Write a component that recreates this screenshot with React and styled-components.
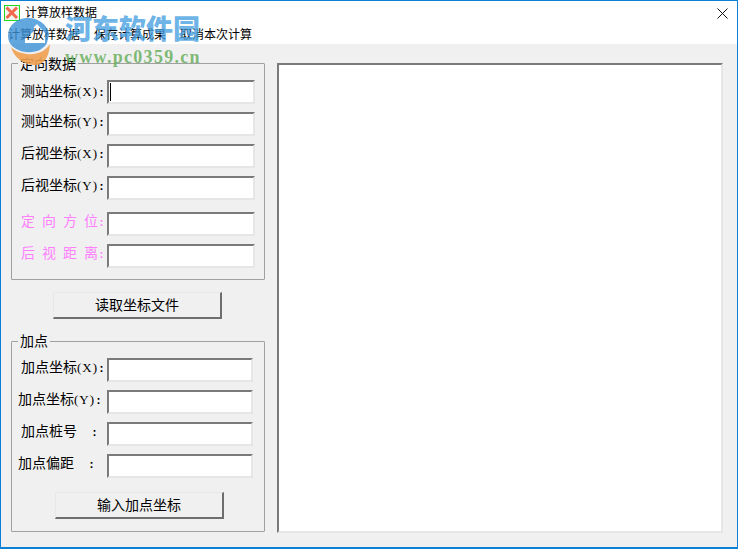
import React from "react";
import styled, { createGlobalStyle } from "styled-components";

const Global = createGlobalStyle`
  html, body { margin: 0; padding: 0; background: #fff; }
  * { box-sizing: border-box; }
`;

const cjk = `"Noto Sans CJK SC", "Liberation Sans", sans-serif`;

const Win = styled.div`
  position: relative;
  width: 738px;
  height: 549px;
  border: 1px solid #0c7fd6;
  border-bottom-width: 2px;
  background: #f0f0f0;
  font-family: ${cjk};
  font-size: 14px;
  color: #000;
  overflow: hidden;
  display: flex;
  flex-direction: column;
`;
const TitleBar = styled.div`
  height: 22px;
  background: #fff;
  display: flex;
  align-items: center;
  padding: 2px 0 0 3px;
  flex: none;
`;
const Title = styled.span`
  margin-left: 5px;
  margin-bottom: 2px;
  font-size: 12px;
  line-height: 18px;
`;
const Close = styled.svg`
  margin-left: auto;
  margin-right: 9px;
  width: 11px;
  height: 11px;
`;
const Menu = styled.div`
  height: 21px;
  background: #fff;
  flex: none;
  display: flex;
  align-items: center;
  padding-left: 7px;
  gap: 14px;
  font-size: 12px;
`;
const Body = styled.div`
  flex: 1;
  display: flex;
  padding: 19px 14px 13px 10px;
  gap: 12px;
`;
const Left = styled.div`
  width: 254px;
  display: flex;
  flex-direction: column;
  flex: none;
`;
const Group = styled.div`
  position: relative;
  border: 1px solid #a0a0a0;
  border-radius: 1px;
  height: ${p => p.$h}px;
  padding: ${p => p.$pad};
  margin-top: ${p => p.$mt || 0}px;
  display: flex;
  flex-direction: column;
`;
const Legend = styled.span`
  position: absolute;
  top: ${p => p.$top}px;
  left: 6px;
  padding: 0 2px;
  background: #f0f0f0;
  font-size: 14px;
  line-height: 18px;
`;
const Row = styled.div`
  display: flex;
  align-items: center;
  height: 24px;
  margin-bottom: ${p => p.$mb}px;
  flex: none;
`;
const Label = styled.label`
  width: ${p => p.$w}px;
  flex: none;
  padding-left: ${p => p.$pl}px;
  padding-bottom: ${p => p.$up * 2}px;
  white-space: nowrap;
  font-size: 14px;
  line-height: 18px;
  color: ${p => p.$pink ? "#ff80ff" : "#000"};
`;
const Spaced = styled.span`
  letter-spacing: 7px;
`;
const Latin = styled.span`
  font-family: "Liberation Serif", serif;
  font-size: 13px;
  letter-spacing: 1px;
`;
const Colon = styled.span`
  font-family: "Liberation Mono", monospace;
  font-size: 11.67px;
  font-weight: 700;
`;
const Field = styled.div`
  position: relative;
  width: ${p => p.$w}px;
  height: 24px;
  background: #fff;
  border: 2px solid;
  border-color: #7a7a7a #e6e6e6 #e6e6e6 #7a7a7a;
  flex: none;
`;
const Caret = styled.span`
  position: absolute;
  left: 1px;
  top: 1px;
  width: 1px;
  height: 18px;
  background: #000;
`;
const Button = styled.button`
  display: block;
  flex: none;
  width: 169px;
  height: 27px;
  margin-left: ${p => p.$ml}px;
  margin-top: ${p => p.$mt}px;
  padding: 0 0 2px 0;
  background: #f0f0f0;
  border: 2px solid;
  border-color: #e8e8e8 #6e6e6e #6e6e6e #e8e8e8;
  border-top-width: 1px;
  border-left-width: 1px;
  font-family: ${cjk};
  font-size: 14px;
  color: #000;
`;
const Output = styled.div`
  width: 446px;
  height: 470px;
  flex: none;
  background: #fff;
  border: 2px solid;
  border-color: #7a7a7a #e6e6e6 #e6e6e6 #7a7a7a;
`;
const Watermark = styled.div`
  position: absolute;
  left: 4px;
  top: 6px;
  width: 210px;
  height: 62px;
  pointer-events: none;
`;
const MarkLogo = styled.svg`
  position: absolute;
  left: 2px;
  top: 5px;
  width: 58px;
  height: 58px;
`;
const MarkName = styled.span`
  position: absolute;
  left: 60px;
  top: 6px;
  font-family: "Noto Sans CJK SC", sans-serif;
  font-weight: 900;
  font-size: 27px;
  line-height: 30px;
  white-space: nowrap;
  color: rgba(70, 160, 225, 0.8);
`;
const MarkUrl = styled.span`
  position: absolute;
  left: 60px;
  top: 40px;
  font-family: "Liberation Serif", serif;
  font-weight: 700;
  font-size: 18px;
  line-height: 20px;
  letter-spacing: 1.3px;
  white-space: nowrap;
  color: rgba(105, 175, 95, 0.85);
`;

const X = ({ c }) => <Latin>({c})</Latin>;

const AppIcon = () => (
  <svg width="16" height="16" viewBox="0 0 16 16" style={{ flex: "none" }}>
    <rect x="0.5" y="0.5" width="15" height="15" fill="#f4f4ee" stroke="#22d622" />
    <path d="M2.5 2.5 L13 13 M13 2.5 L2.5 13" stroke="#f2674e" strokeWidth="3" />
  </svg>
);

export default function App() {
  return (
    <>
      <Global />
      <Win>
        <TitleBar>
          <AppIcon />
          <Title>计算放样数据</Title>
          <Close viewBox="0 0 11 11">
            <path d="M0.5 0.5 L10.5 10.5 M10.5 0.5 L0.5 10.5" stroke="#111" strokeWidth="1" fill="none" />
          </Close>
        </TitleBar>
        <Menu>
          <span>计算放样数据</span>
          <span>保存计算成果</span>
          <span>取消本次计算</span>
        </Menu>
        <Body>
          <Left>
            <Group $h={217} $pad="16px 0 0 9px">
              <Legend $top={-10}>定向数据</Legend>
              <Row $mb={8}><Label $w={86} $pl={0} $up={1}>测站坐标<X c="X" /><Colon>:</Colon></Label><Field $w={148}><Caret /></Field></Row>
              <Row $mb={8}><Label $w={86} $pl={0} $up={3}>测站坐标<X c="Y" /><Colon>:</Colon></Label><Field $w={148} /></Row>
              <Row $mb={8}><Label $w={86} $pl={0} $up={3}>后视坐标<X c="X" /><Colon>:</Colon></Label><Field $w={148} /></Row>
              <Row $mb={12}><Label $w={86} $pl={0} $up={3}>后视坐标<X c="Y" /><Colon>:</Colon></Label><Field $w={148} /></Row>
              <Row $mb={8}><Label $w={86} $pl={0} $up={3} $pink><Spaced>定向方</Spaced>位<Colon>:</Colon></Label><Field $w={148} /></Row>
              <Row $mb={0}><Label $w={86} $pl={0} $up={3} $pink><Spaced>后视距</Spaced>离<Colon>:</Colon></Label><Field $w={148} /></Row>
            </Group>
            <Button $ml={42} $mt={12}>读取坐标文件</Button>
            <Group $h={191} $mt={22} $pad="16px 0 0 6px">
              <Legend $top={-11}>加点</Legend>
              <Row $mb={8}><Label $w={89} $pl={3} $up={3}>加点坐标<X c="X" /><Colon>:</Colon></Label><Field $w={146} /></Row>
              <Row $mb={8}><Label $w={89} $pl={0} $up={3}>加点坐标<X c="Y" /><Colon>:</Colon></Label><Field $w={146} /></Row>
              <Row $mb={8}><Label $w={89} $pl={3} $up={3}>加点桩号　<Colon>:</Colon></Label><Field $w={146} /></Row>
              <Row $mb={0}><Label $w={89} $pl={0} $up={3}>加点偏距　<Colon>:</Colon></Label><Field $w={146} /></Row>
              <Button $ml={37} $mt={14}>输入加点坐标</Button>
            </Group>
          </Left>
          <Output />
        </Body>
        <Watermark>
          <MarkLogo viewBox="0 0 58 58">
            <path fillRule="evenodd" d="M1 24 C1 13 10 6 21 6 C31 6 40 12 42 22 L40 31 C36 38 28 41 19 40 C9 39 1 33 1 24 Z M18 31 L38 31 L38 21 L30 12 L27 15 L27 19 L18 27 Z" fill="rgba(60,145,215,0.8)" />
            <path d="M4 35 C7 46 18 54 30 53 C38 52 42 44 43 32 C38 40 29 43 20 42 C13 41 8 39 4 35 Z" fill="rgba(240,160,80,0.9)" />
          </MarkLogo>
          <MarkName>河东软件园</MarkName>
          <MarkUrl>www.pc0359.cn</MarkUrl>
        </Watermark>
      </Win>
    </>
  );
}
